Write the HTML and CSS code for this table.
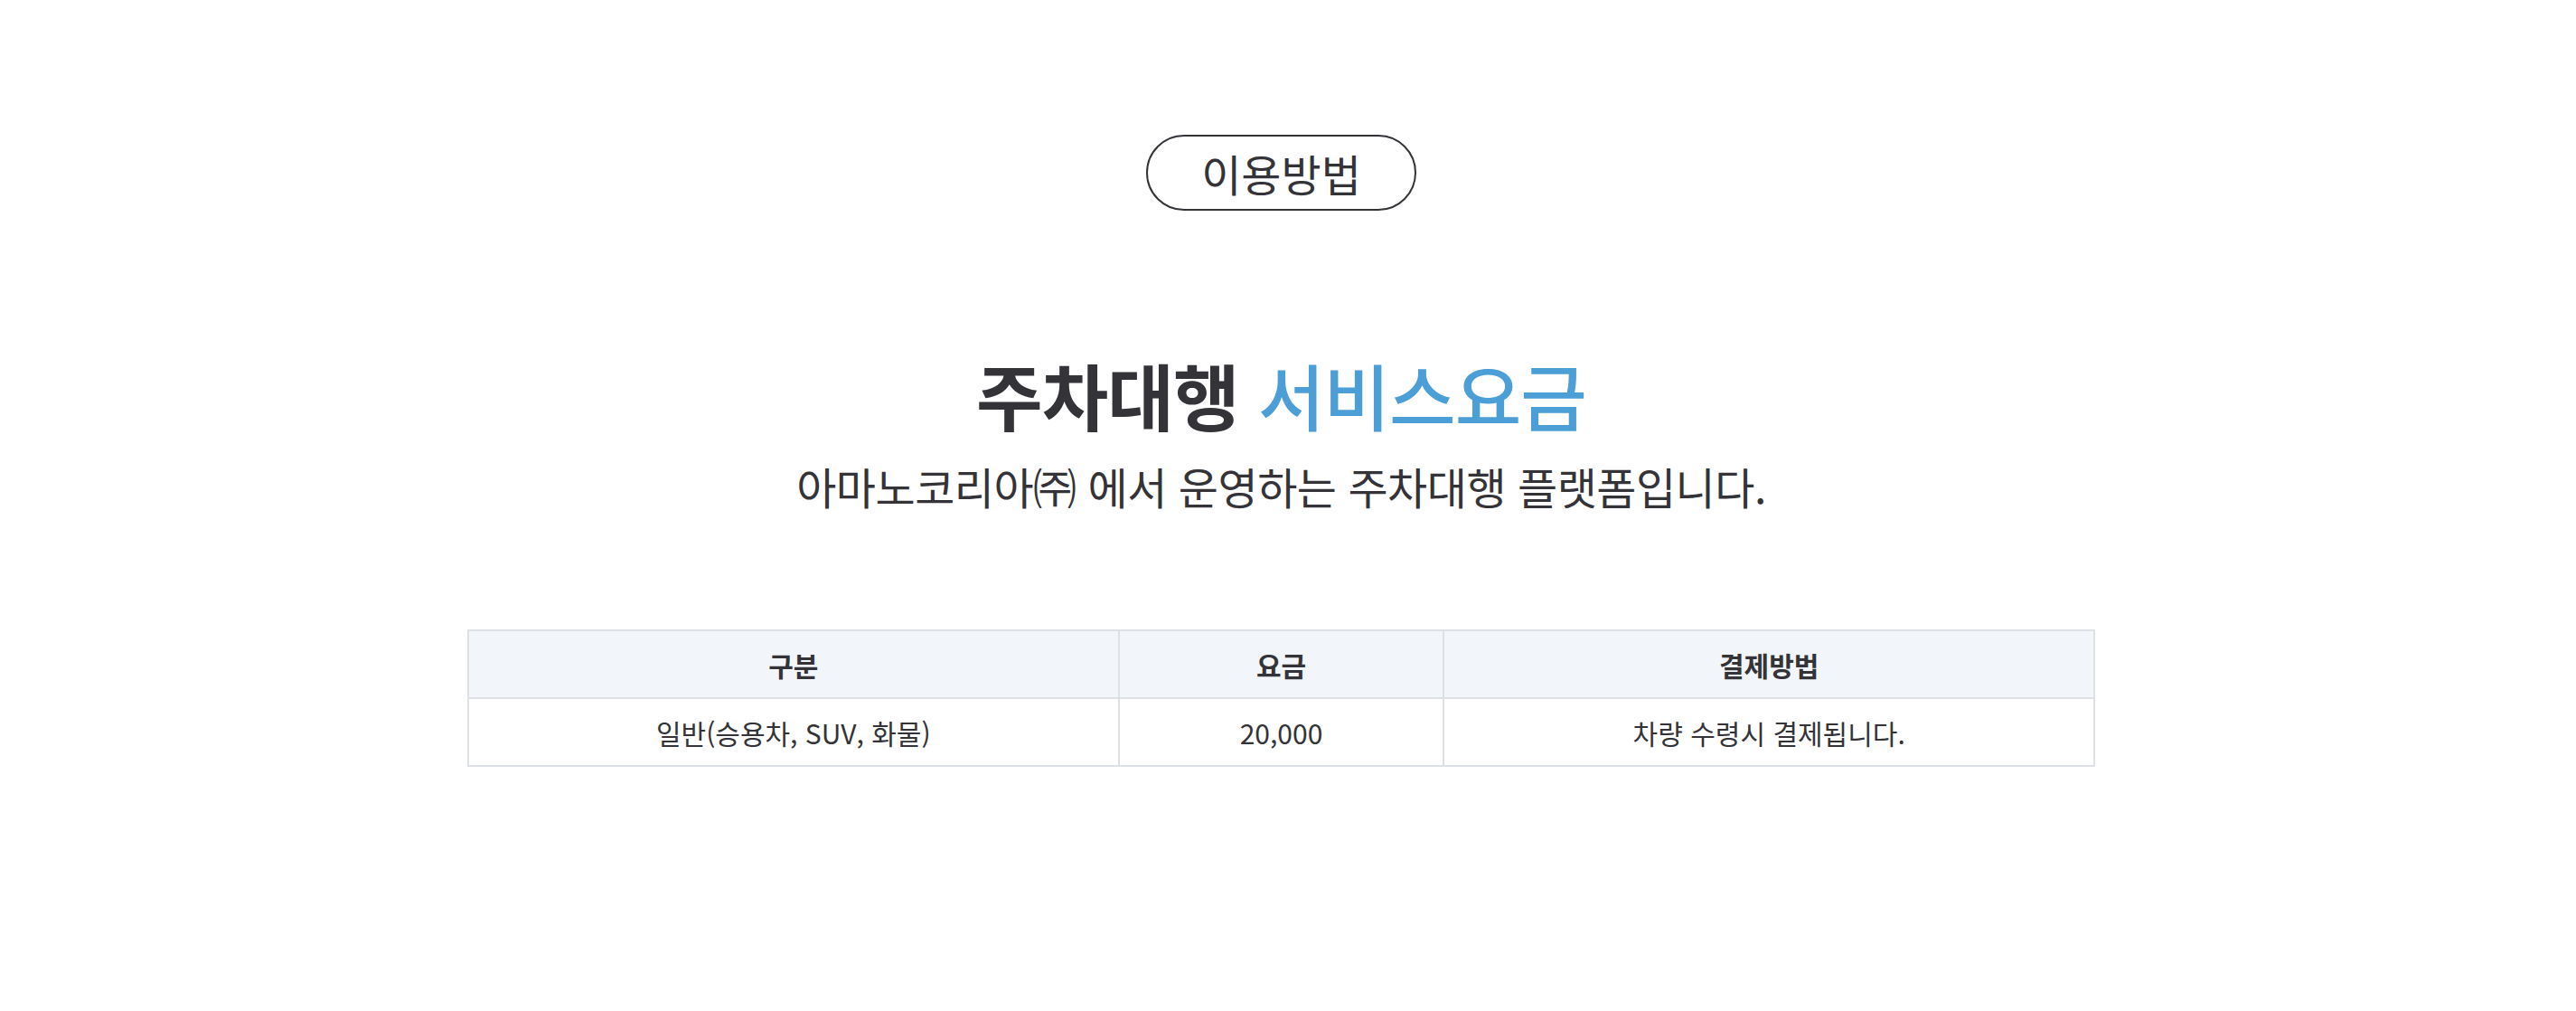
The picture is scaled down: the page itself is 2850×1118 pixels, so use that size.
FILE: index.html
```html
<!DOCTYPE html>
<html lang="ko">
<head>
  <meta charset="UTF-8" />
  <meta name="viewport" content="width=device-width, initial-scale=1.0" />
  <title>주차대행 서비스요금</title>
  <link rel="stylesheet" href="styles.css">
</head>
<body>
<!-- Usage / Fee Section -->
<section class="usage">
  <div class="usage-tag">이용방법</div>

  <h2 class="fee-title">주차대행 <span class="accent">서비스요금</span></h2>
  <p class="fee-desc">아마노코리아㈜ 에서 운영하는 주차대행 플랫폼입니다.</p>

  <!-- Fee Table -->
  <table class="fee-table">
    <colgroup>
      <col class="col-type" />
      <col class="col-price" />
      <col class="col-pay" />
    </colgroup>
    <thead>
      <tr>
        <th>구분</th>
        <th>요금</th>
        <th>결제방법</th>
      </tr>
    </thead>
    <tbody>
      <tr>
        <td>일반(승용차, SUV, 화물)</td>
        <td>20,000</td>
        <td>차량 수령시 결제됩니다.</td>
      </tr>
    </tbody>
  </table>
</section>
</body>
</html>
```

FILE: styles.css
```css
/* Global Styles */
body {
  margin: 0;
  padding: 0;
  background: #fff;
  color: #333338;
  font-family: "Noto Sans CJK KR", "Noto Sans", sans-serif;
}
/* Section Layout */
.usage {
  display: flex;
  flex-direction: column;
  align-items: center;
  padding: 149px 15px 200px 0;
}
.usage-tag {
  display: flex;
  align-items: center;
  justify-content: center;
  box-sizing: border-box;
  width: 299px;
  height: 84px;
  border: 2px solid #333338;
  border-radius: 42px;
  font-size: 48px;
  line-height: 1;
}
/* Title */
.fee-title {
  margin: 162px 0 0;
  font-size: 80px;
  font-weight: 700;
  line-height: 1;
  letter-spacing: -1px;
}
.fee-title .accent {
  color: #4c9fd6;
  font-weight: 500;
}
.fee-desc {
  margin: 38px 0 0;
  font-size: 48px;
  line-height: 1;
  letter-spacing: -0.5px;
}
/* Fee Table */
.fee-table {
  width: 1801px;
  margin-top: 135px;
  border-collapse: collapse;
  border: 2px solid #dde0e4;
  font-size: 30px;
  text-align: center;
}
.col-type,
.col-pay {
  width: 40%;
}
.col-price {
  width: 20%;
}
.fee-table th,
.fee-table td {
  border: 2px solid #dde0e4;
  height: 73px;
  padding: 0;
}
.fee-table th {
  background: #f2f6fa;
  font-weight: 700;
}
```
